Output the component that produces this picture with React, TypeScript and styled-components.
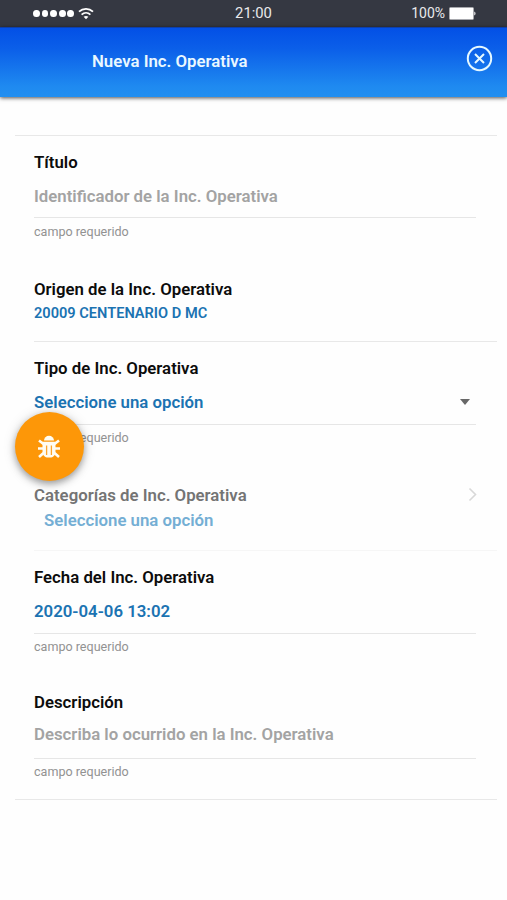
import React from 'react';
import styled, { createGlobalStyle } from 'styled-components';

const Global = createGlobalStyle`
  * { box-sizing: border-box; }
  body { margin: 0; background: #fefefe; font-family: Roboto, "Liberation Sans", sans-serif; }
`;

const Screen = styled.div`
  position: relative;
  width: 507px;
  height: 900px;
  overflow: hidden;
  background: #fefefe;
`;

const StatusBar = styled.div`
  display: grid;
  grid-template-columns: 1fr auto 1fr;
  align-items: center;
  height: 27px;
  padding: 0 31px;
  background: #353842;
  color: #e9e9ec;
  font-size: 14.8px;
  line-height: 27px;
`;

const Signal = styled.div`
  display: flex;
  align-items: center;
  gap: 1.8px;
  padding-left: 2px;
`;

const Dot = styled.span`
  width: 6.8px;
  height: 7.5px;
  border-radius: 50%;
  background: #fff;
`;

const WifiIcon = styled.svg`
  margin-left: 2px;
`;

const Power = styled.div`
  display: flex;
  align-items: center;
  justify-content: flex-end;
  gap: 4px;
  font-size: 14px;
`;

const Header = styled.header`
  display: flex;
  align-items: center;
  justify-content: space-between;
  height: 70px;
  padding: 0 14px 9px 92px;
  background: linear-gradient(#0350e6 0%, #0b5fe9 30%, #1f8af0 85%, #218ff0 100%);
  border-top: 1px solid #0d3fae;
  box-shadow: 0 1px 4px rgba(0, 0, 0, 0.7);
`;

const Title = styled.h1`
  margin: 5px 0 0;
  color: #eaf8ff;
  font-size: 16.8px;
  line-height: 20px;
  font-weight: 600;
`;

const List = styled.main`
  margin: 38px 10px 0 15px;
  padding-left: 19px;
  height: 665px;
  border-top: 1px solid #e8e8e8;
  border-bottom: 1px solid #e8e8e8;
`;

const Item = styled.section<{ $height: number; $line?: string }>`
  height: ${(p) => p.$height}px;
  padding-top: 16px;
  border-bottom: ${(p) => (p.$line ? `1px solid ${p.$line}` : '0')};
`;

const Label = styled.div<{ $muted?: boolean }>`
  height: 21px;
  color: ${(p) => (p.$muted ? '#747474' : '#0c0c0c')};
  font-size: 16.8px;
  line-height: 20px;
  font-weight: 600;
`;

const Field = styled.div<{ $height: number; $top: number }>`
  display: flex;
  justify-content: space-between;
  height: ${(p) => p.$height}px;
  padding: ${(p) => p.$top}px 6px 0 0;
  margin-right: 21px;
  border-bottom: 1px solid #e6e6e6;
`;

const Value = styled.div<{ $tone?: 'placeholder' | 'soft'; $size?: number; $indent?: number; $gap?: number }>`
  margin-left: ${(p) => p.$indent ?? 0}px;
  padding-top: ${(p) => p.$gap ?? 0}px;
  color: ${(p) => (p.$tone === 'placeholder' ? '#a3a3a3' : p.$tone === 'soft' ? '#74aed4' : '#1b73b2')};
  font-size: ${(p) => p.$size ?? 16.8}px;
  line-height: 20px;
  font-weight: 600;
`;

const Helper = styled.div<{ $gap?: number }>`
  padding-top: ${(p) => p.$gap ?? 4}px;
  color: #929292;
  font-size: 12.55px;
  line-height: 18px;
`;

const Row = styled.div`
  display: flex;
  justify-content: space-between;
  padding-right: 20px;
`;

const Chevron = styled.svg`
  margin-top: 1px;
`;

const Caret = styled.svg`
  margin-top: 7px;
`;

const BugButton = styled.button`
  position: absolute;
  left: 15px;
  top: 412px;
  display: flex;
  align-items: center;
  justify-content: center;
  width: 69px;
  height: 69px;
  padding: 0 1px 0 0;
  border: 0;
  border-radius: 50%;
  background: #fd9708;
  box-shadow: 0 3px 7px rgba(0, 0, 0, 0.34), 0 1px 14px rgba(0, 0, 0, 0.12);
`;

export default function App() {
  return (
    <Screen>
      <Global />
      <StatusBar>
        <Signal>
          {[0, 1, 2, 3, 4].map((n) => (
            <Dot key={n} />
          ))}
          <WifiIcon width="16" height="13" viewBox="0 0 16 13" fill="none" stroke="#fff" strokeWidth="1.8">
            <path d="M1 4.6C5 .9 11 .9 15 4.6M3.6 7.6c2.6-2.3 6.2-2.3 8.8 0" />
            <path d="M5.6 9.8c1.4-1.2 3.4-1.2 4.8 0L8 12.3z" fill="#fff" stroke="none" />
          </WifiIcon>
        </Signal>
        <span>21:00</span>
        <Power>
          100%
          <svg width="27" height="13" viewBox="0 0 27 13">
            <rect x=".5" y=".5" width="24" height="12" rx="1" fill="#fff" stroke="#a7a8ad" />
            <path d="M25.3 4.5c1.6.7 1.6 3.3 0 4z" fill="#fff" />
          </svg>
        </Power>
      </StatusBar>
      <Header>
        <Title>Nueva Inc. Operativa</Title>
        <svg width="27" height="27" viewBox="0 0 27 27" fill="none" stroke="#e5f8ff" strokeWidth="2">
          <circle cx="13.5" cy="13.5" r="11.7" />
          <path d="M9 9l9 9M18 9l-9 9" />
        </svg>
      </Header>
      <List>
        <Item $height={127}>
          <Label>Título</Label>
          <Field $height={45} $top={13}>
            <Value $tone="placeholder">Identificador de la Inc. Operativa</Value>
          </Field>
          <Helper $gap={5}>campo requerido</Helper>
        </Item>
        <Item $height={79} $line="#e8e8e8">
          <Label>Origen de la Inc. Operativa</Label>
          <Value $size={14.6} $gap={3}>20009 CENTENARIO D MC</Value>
        </Item>
        <Item $height={127}>
          <Label>Tipo de Inc. Operativa</Label>
          <Field $height={46} $top={13}>
            <Value>Seleccione una opción</Value>
            <Caret width="10" height="6" viewBox="0 0 10 6">
              <path d="M0 0h10L5 6z" fill="#686868" />
            </Caret>
          </Field>
          <Helper>campo requerido</Helper>
        </Item>
        <Item $height={82} $line="#f6f6f6">
          <Row>
            <Label $muted>Categorías de Inc. Operativa</Label>
            <Chevron width="9" height="16" viewBox="0 0 9 16" fill="none" stroke="#d8d8d8" strokeWidth="1.6">
              <path d="M1.5 2.5l6 6-6 6" />
            </Chevron>
          </Row>
          <Value $tone="soft" $indent={10} $gap={4}>Seleccione una opción</Value>
        </Item>
        <Item $height={125}>
          <Label>Fecha del Inc. Operativa</Label>
          <Field $height={46} $top={13}>
            <Value>2020-04-06 13:02</Value>
          </Field>
          <Helper>campo requerido</Helper>
        </Item>
        <Item $height={123}>
          <Label>Descripción</Label>
          <Field $height={46} $top={11}>
            <Value $tone="placeholder">Describa lo ocurrido en la Inc. Operativa</Value>
          </Field>
          <Helper>campo requerido</Helper>
        </Item>
      </List>
      <BugButton aria-label="Reportar">
        <svg width="24" height="26" viewBox="0 0 24 26" fill="none" stroke="#fffdf2" strokeWidth="2.6">
          <path d="M7 6.6a5 4.9 0 0 1 10 0z" fill="#fffdf2" stroke="none" />
          <path d="M5.5 7.8h13v9.7c0 4-2.7 6-5.3 6h-2.400c-2.600 0-5.300-2-5.300-6z" fill="#fffdf2" stroke="none" />
          <path d="M2 6.500l4.500 3.500M22 6.500L17.500 10M1 14.500h5M23 14.500h-5M2 23l4.500-4M22 23l-4.500-4" />
          <path d="M9.600 11.500v9.500M14.400 11.500v9.500" stroke="#fda52d" strokeWidth="1.300" />
        </svg>
      </BugButton>
    </Screen>
  );
}
